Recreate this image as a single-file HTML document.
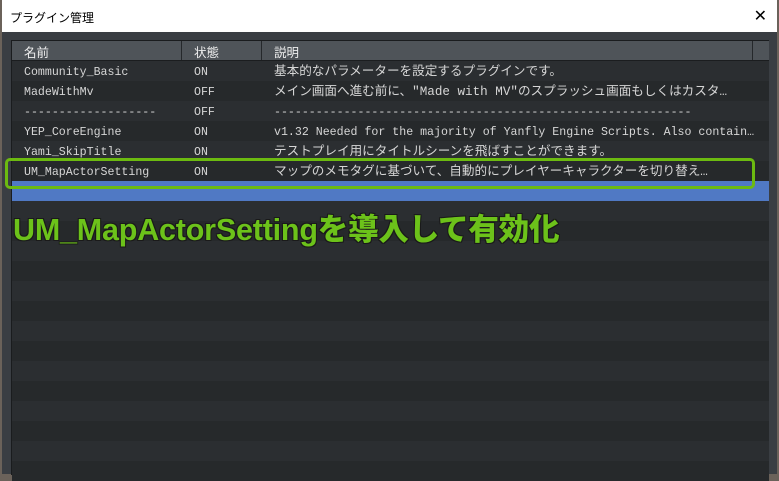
<html><head><style>
body{margin:0;width:779px;height:474px;background:#6b625a;overflow:hidden;font-family:"Liberation Mono","Noto Sans CJK JP",monospace;position:relative}
.win{position:absolute;left:2px;top:0;width:775px;height:474px;background:#3a3e43}
.title{position:absolute;left:0;top:0;width:775px;height:32px;background:#fff;font:12px "Liberation Sans","Noto Sans CJK JP",sans-serif;color:#000}
.title span{position:absolute;left:8px;top:9px}
.title b{position:absolute;right:10px;top:6px;font-weight:normal;font-size:16px}
.tbl{position:absolute;left:9px;top:40px;width:757px;height:434px;background:#26292b;border-left:1px solid #1a1c1e;border-top:1px solid #1a1c1e}
.hd{position:absolute;left:0;top:0;width:757px;height:19px;background:#4f5459;border-bottom:1px solid #1b1d1f;color:#eee;font:12.5px "Liberation Sans","Noto Sans CJK JP",sans-serif}
.hd span{position:absolute;top:1px}
.vl{position:absolute;top:0;width:1px;height:19px;background:#25282b}
.row{position:absolute;left:0;width:757px;height:20px;color:#d6d6d6;font-size:11.6px;line-height:20px;white-space:nowrap;overflow:hidden}
.row span{position:absolute;top:2px}
.row span.j{font-size:12.6px;top:1px}
.a{background:#26292b}.b{background:#2b2e31}
</style></head><body>
<div class="win">
<div class="title"><span>プラグイン管理</span><b>✕</b></div>
<div class="tbl">
<div class="hd"><span style="left:12px">名前</span><span style="left:182px">状態</span><span style="left:262px">説明</span>
<div class="vl" style="left:169px"></div><div class="vl" style="left:249px"></div><div class="vl" style="left:740px"></div></div>
<div class="row b" style="top:20px"><span style="left:12px">Community_Basic</span><span style="left:182px">ON</span><span class="j" style="left:262px">基本的なパラメーターを設定するプラグインです。</span></div>
<div class="row a" style="top:40px"><span style="left:12px">MadeWithMv</span><span style="left:182px">OFF</span><span class="j" style="left:262px">メイン画面へ進む前に、"Made with MV"のスプラッシュ画面もしくはカスタ…</span></div>
<div class="row b" style="top:60px"><span style="left:12px">-------------------</span><span style="left:182px">OFF</span><span style="left:262px">------------------------------------------------------------</span></div>
<div class="row a" style="top:80px"><span style="left:12px">YEP_CoreEngine</span><span style="left:182px">ON</span><span style="left:262px">v1.32 Needed for the majority of Yanfly Engine Scripts. Also contain…</span></div>
<div class="row b" style="top:100px"><span style="left:12px">Yami_SkipTitle</span><span style="left:182px">ON</span><span class="j" style="left:262px">テストプレイ用にタイトルシーンを飛ばすことができます。</span></div>
<div class="row a" style="top:120px"><span style="left:12px">UM_MapActorSetting</span><span style="left:182px">ON</span><span class="j" style="left:262px">マップのメモタグに基づいて、自動的にプレイヤーキャラクターを切り替え…</span></div>
<div class="row" style="top:140px;background:#5079c4"></div>
<div class="row b" style="top:160px"></div><div class="row a" style="top:180px"></div>
<div class="row b" style="top:200px"></div><div class="row a" style="top:220px"></div>
<div class="row b" style="top:240px"></div><div class="row a" style="top:260px"></div>
<div class="row b" style="top:280px"></div><div class="row a" style="top:300px"></div>
<div class="row b" style="top:320px"></div><div class="row a" style="top:340px"></div>
<div class="row b" style="top:360px"></div><div class="row a" style="top:380px"></div>
<div class="row b" style="top:400px"></div><div class="row a" style="top:420px"></div>
</div>
</div>
<div style="position:absolute;left:5px;top:158px;width:744px;height:25px;border:3px solid #6cba10;border-radius:5px"></div>
<div style="position:absolute;left:13px;top:205px;font:900 30.5px 'Liberation Sans','Noto Sans CJK JP',sans-serif;color:#6cc21a;-webkit-text-stroke:1.5px #1e2a10;paint-order:stroke fill;text-shadow:1px 1px 0 #1a1a1a,-1px -1px 0 #1a1a1a,1px -1px 0 #1a1a1a,-1px 1px 0 #1a1a1a;white-space:nowrap;letter-spacing:-0.2px">UM_MapActorSettingを導入して有効化</div>
</body></html>
